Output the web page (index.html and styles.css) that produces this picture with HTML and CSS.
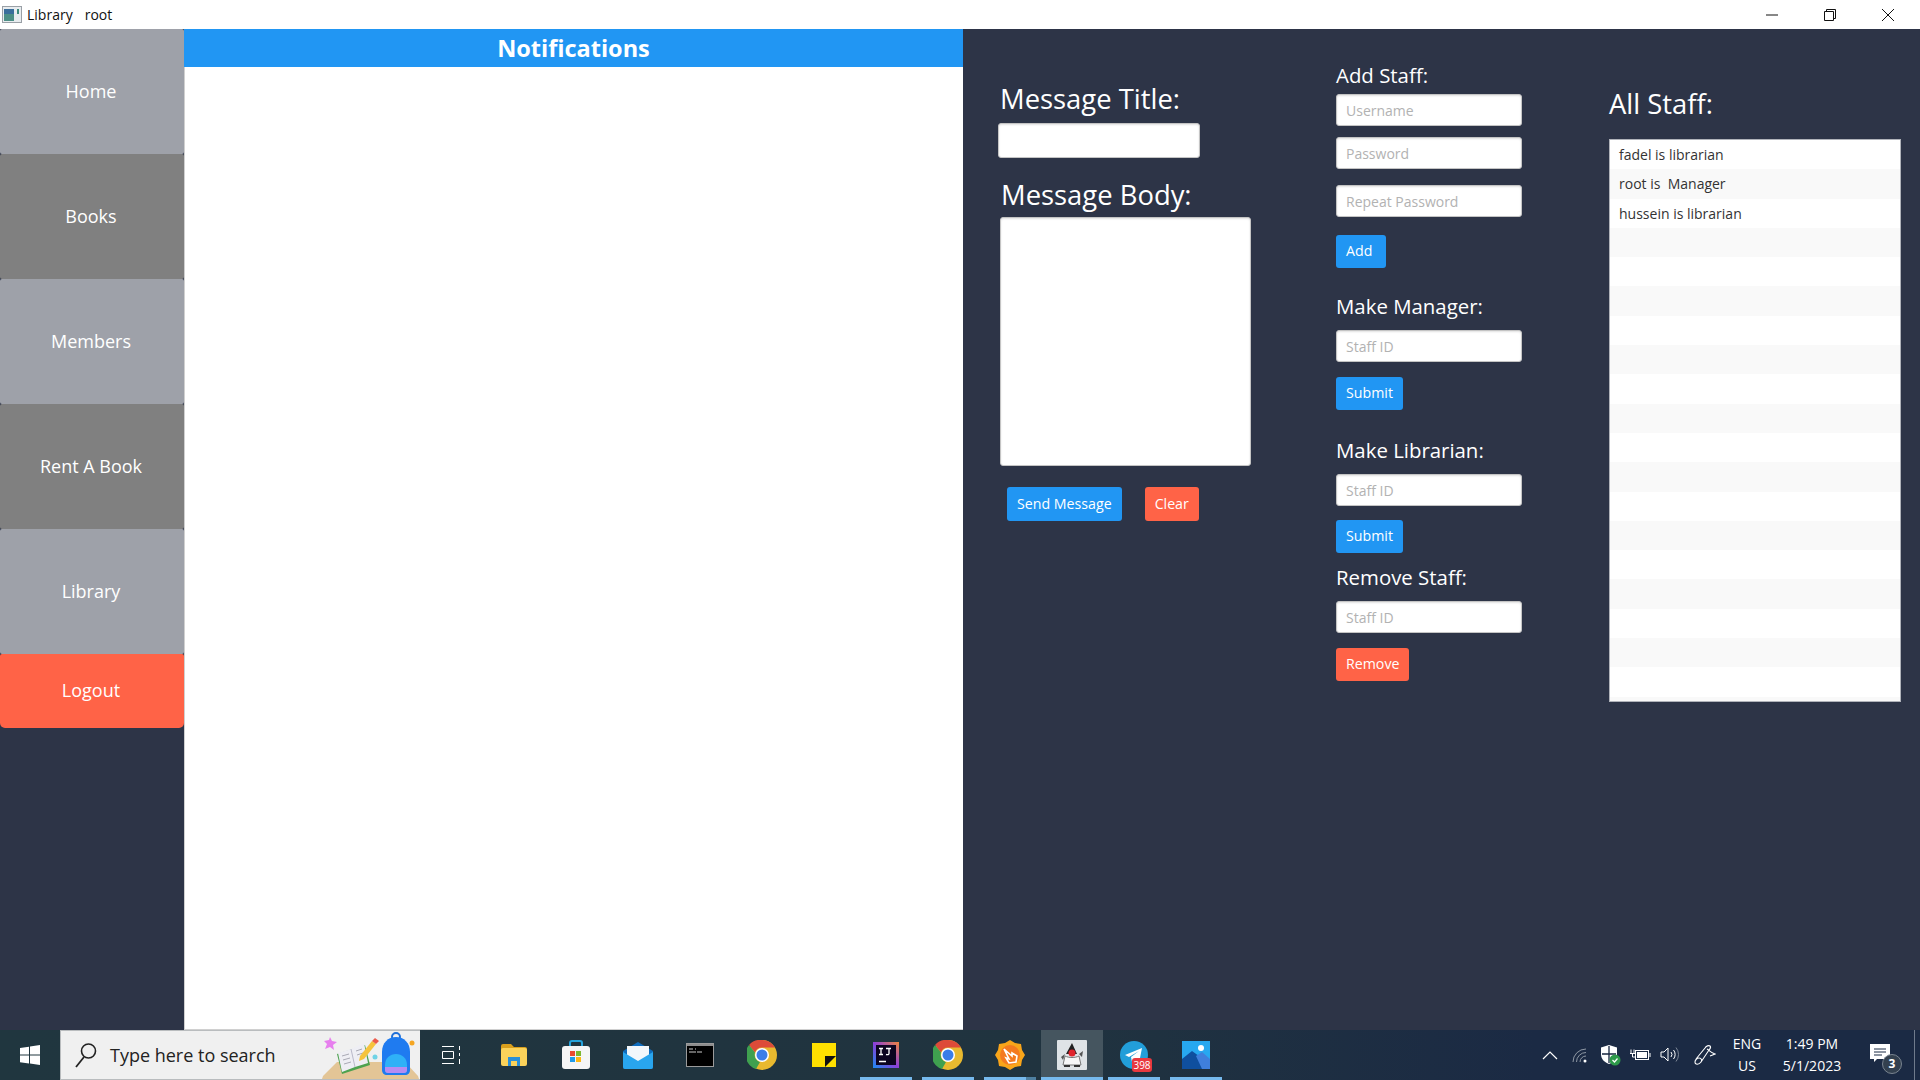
FILE: index.html
```html
<!DOCTYPE html>
<html lang="en">
<head>
    <meta charset="UTF-8">
    <title>Library root</title>
    <link rel="stylesheet" href="styles.css">
</head>
<body>

    <div class="titlebar">
        <svg class="app-icon" width="20" height="18" viewBox="0 0 20 18">
            <rect x="0.5" y="0.5" width="19" height="16" fill="#e8ecef" stroke="#9aa0a6"/>
            <rect x="2" y="3" width="10" height="12" fill="#4c8f86"/>
            <rect x="2" y="3" width="10" height="5" fill="#3a6e9b"/>
            <rect x="15" y="3" width="2" height="5" fill="#3c8b7d"/>
        </svg>
        <span class="app-title">Library</span>
        <span class="app-user">root</span>
        <div class="window-buttons">
            <div class="window-button">
                <svg width="14" height="14" viewBox="0 0 14 14"><path d="M1 7h12" stroke="#111" fill="none"/></svg>
            </div>
            <div class="window-button">
                <svg width="14" height="14" viewBox="0 0 14 14"><path d="M1.5 3.5h9v9h-9zM3.5 3.5v-2h9v9h-2" stroke="#111" fill="none"/></svg>
            </div>
            <div class="window-button">
                <svg width="14" height="14" viewBox="0 0 14 14"><path d="M1 1l12 12M13 1L1 13" stroke="#111" fill="none"/></svg>
            </div>
        </div>
    </div>

    <div class="main">
        <div class="sidebar">
            <button class="nav-btn">Home</button>
            <button class="nav-btn dark">Books</button>
            <button class="nav-btn">Members</button>
            <button class="nav-btn dark">Rent A Book</button>
            <button class="nav-btn">Library</button>
            <button class="nav-btn logout">Logout</button>
        </div>

        <div class="notifications">
            <div class="notifications-header">Notifications</div>
        </div>

        <div class="panel">
            <div class="message-col">
                <label class="big-label title-label">Message Title:</label>
                <input class="title-input" type="text">
                <label class="big-label body-label">Message Body:</label>
                <textarea class="body-input"></textarea>
                <div class="message-actions">
                    <button class="btn blue">Send Message</button>
                    <button class="btn red">Clear</button>
                </div>
            </div>

            <div class="staff-col">
                <label class="small-label">Add Staff:</label>
                <input class="field mt-5" type="text" placeholder="Username">
                <input class="field mt-11" type="text" placeholder="Password">
                <input class="field mt-16" type="text" placeholder="Repeat Password">
                <button class="btn blue add mt-18">Add</button>

                <label class="small-label mt-24">Make Manager:</label>
                <input class="field mt-10" type="text" placeholder="Staff ID">
                <button class="btn blue mt-15">Submit</button>

                <label class="small-label mt-26">Make Librarian:</label>
                <input class="field mt-10" type="text" placeholder="Staff ID">
                <button class="btn blue mt-14">Submit</button>

                <label class="small-label mt-10">Remove Staff:</label>
                <input class="field mt-10" type="text" placeholder="Staff ID">
                <button class="btn red mt-15">Remove</button>
            </div>

            <div class="list-col">
                <label class="big-label">All Staff:</label>
                <ul class="staff-list">
                    <li>fadel is librarian</li>
                    <li>root is&nbsp; Manager</li>
                    <li>hussein is librarian</li>
                    <li></li><li></li><li></li><li></li><li></li><li></li><li></li><li></li>
                    <li></li><li></li><li></li><li></li><li></li><li></li><li></li><li></li><li></li>
                </ul>
            </div>
        </div>
    </div>

    <div class="taskbar">
        <div class="start">
            <svg width="22" height="22" viewBox="0 0 22 22">
                <path d="M1 4l9-1.3V10.500H1zM11 2.500L21 1v9.500H11zM1 11.500h9v8L1 18.200zM11 11.500h10V21l-10-1.500z" fill="#fff"/>
            </svg>
        </div>

        <div class="search">
            <svg class="search-glass" width="24" height="28" viewBox="0 0 24 28">
                <circle cx="14.500" cy="10" r="7" fill="none" stroke="#222" stroke-width="1.600"/>
                <path d="M10 16L2 26" stroke="#222" stroke-width="1.800" fill="none"/>
            </svg>
            <span class="search-text">Type here to search</span>
            <svg class="search-art" width="110" height="49" viewBox="0 0 110 49">
                <path d="M12 49l1-3 14-14 68 0 13 14 1 3z" fill="#e3c596"/>
                <path d="M20 7l2 4 5 1-4 3 1 5-4-3-5 2 2-5-3-3 5-1z" fill="#e77fee"/>
                <circle cx="65" cy="27" r="2.500" fill="#6fd3e6"/>
                <circle cx="102" cy="13" r="2.500" fill="#f5a623"/>
                <path d="M27 24l28-9 5 20-28 9z" fill="#4da24f"/>
                <path d="M28 23l13-4 13-6 4 20-13 4-13 5z" fill="#eeeef4"/>
                <path d="M41 19l4 18" stroke="#b9b9c9" fill="none"/>
                <path d="M32 26l7-2M33 30l7-2M34 34l7-2M46 21l6-2M47 25l6-2" stroke="#a9a9b5" fill="none"/>
                <path d="M50 26l12-15 4 3-12 15-5 2z" fill="#f6c33d"/>
                <path d="M62 11l3-3 4 3-3 3z" fill="#ec5a4c"/>
                <path d="M86 3a4 4 0 0 1 0 8 4 4 0 0 1 0-8z" fill="none" stroke="#1f6fd8" stroke-width="2"/>
                <path d="M72 22c0-9 6-15 14-15s14 6 14 15v18c0 3-2 5-5 5H77c-3 0-5-2-5-5z" fill="#1f7bf0"/>
                <path d="M75 35c0-7 5-11 11-11s11 4 11 11v5c0 2-1 3-3 3H78c-2 0-3-1-3-3z" fill="#2fb1f7"/>
                <path d="M75 37h22v3c0 2-1 3-3 3H78c-2 0-3-1-3-3z" fill="#b68cf2"/>
            </svg>
        </div>

        <div class="apps">
            <div class="slot">
                <svg width="22" height="20" viewBox="0 0 22 20" fill="none" stroke="#fff">
                    <path d="M1 1.500h12M1 18.500h12M1.500 6.500h11v7h-11zM18.500 1v4M18.500 8v3M18.500 14v5"/>
                </svg>
            </div>
            <div class="slot">
                <svg width="28" height="24" viewBox="0 0 28 24">
                    <path d="M1 3a2 2 0 0 1 2-2h8l3 3h11a2 2 0 0 1 2 2v3H1z" fill="#d99f1c"/>
                    <rect x="1" y="5" width="26" height="18" rx="2" fill="#fbd25a"/>
                    <path d="M8 23v-9h12v9h-3v-5H11v5z" fill="#2a8fd8"/>
                </svg>
            </div>
            <div class="slot">
                <svg width="30" height="30" viewBox="0 0 30 30">
                    <path d="M9 8V3a2 2 0 0 1 2-2h8a2 2 0 0 1 2 2v5" fill="none" stroke="#25a3dc" stroke-width="2"/>
                    <rect x="1" y="6" width="28" height="23" rx="3" fill="#f5f5f5"/>
                    <rect x="9" y="11" width="5" height="5" fill="#ea4a2f"/>
                    <rect x="15" y="11" width="5" height="5" fill="#7cb82f"/>
                    <rect x="9" y="17" width="5" height="5" fill="#1f9bea"/>
                    <rect x="15" y="17" width="5" height="5" fill="#fdb813"/>
                </svg>
            </div>
            <div class="slot">
                <svg width="32" height="28" viewBox="0 0 32 28">
                    <path d="M1 10L16 1l15 9v16a2 2 0 0 1-2 2H3a2 2 0 0 1-2-2z" fill="#0f6cbd"/>
                    <path d="M5 5h22v15H5z" fill="#f2f7fb"/>
                    <path d="M1 11l15 9 15-9v15a2 2 0 0 1-2 2H3a2 2 0 0 1-2-2z" fill="#29a5ee"/>
                </svg>
            </div>
            <div class="slot">
                <svg width="28" height="24" viewBox="0 0 28 24">
                    <rect x="0.500" y="0.500" width="27" height="23" fill="#000" stroke="#9b9b9b"/>
                    <rect x="1" y="1" width="26" height="2" fill="#8d8d8d"/>
                    <path d="M3 6h4M9 6h1M3 9h7M11 9h5" stroke="#ccc" fill="none"/>
                </svg>
            </div>
            <div class="slot">
                <svg width="30" height="30" viewBox="0 0 30 30"><use href="#chrome"/></svg>
            </div>
            <div class="slot">
                <svg width="24" height="24" viewBox="0 0 24 24">
                    <rect width="24" height="24" fill="#ffe000"/>
                    <path d="M13 24V13h11z" fill="#111"/>
                </svg>
            </div>
            <div class="slot on">
                <svg width="26" height="26" viewBox="0 0 26 26">
                    <defs><linearGradient id="ij" x1="0" y1="1" x2="1" y2="0">
                        <stop offset="0" stop-color="#1b8cf2"/><stop offset="0.500" stop-color="#8b3fd8"/><stop offset="1" stop-color="#f0843a"/>
                    </linearGradient></defs>
                    <rect width="26" height="26" fill="url(#ij)"/>
                    <rect x="3" y="3" width="20" height="20" fill="#0c0420"/>
                    <path d="M6 6.500h4M8 6.500v6M6 12.500h4M13 6.500h5M16 6.500v5c0 1-1 1.500-3 1M6 19.500h7" stroke="#fff" stroke-width="1.300" fill="none"/>
                </svg>
            </div>
            <div class="slot on">
                <svg width="30" height="30" viewBox="0 0 30 30">
                    <symbol id="chrome" viewBox="0 0 30 30">
                        <circle cx="15" cy="15" r="15" fill="#e8b92f"/>
                        <path d="M15 0a15 15 0 0 1 13 7.500H15a7.500 7.500 0 0 0-7 5L2 5A15 15 0 0 1 15 0z" fill="#dd4b39"/>
                        <path d="M2 5l6 7.500A7.500 7.500 0 0 0 13 22l-4 7A15 15 0 0 1 2 5z" fill="#3fa04f"/>
                        <circle cx="15" cy="15" r="7" fill="#fff"/>
                        <circle cx="15" cy="15" r="5.500" fill="#3b7de8"/>
                    </symbol>
                    <use href="#chrome"/>
                </svg>
            </div>
            <div class="slot on stacked">
                <svg width="30" height="30" viewBox="0 0 30 30">
                    <path d="M15 0l5 3 6 1 1 6 3 5-3 5-1 6-6 1-5 3-5-3-6-1-1-6-3-5 3-5 1-6 6-1z" fill="#f9a51a"/>
                    <circle cx="15" cy="15" r="10" fill="#f47a20"/>
                    <path d="M9 9l8 7 0-3 5 3-1 6-7 1-3-5 3 1z" fill="none" stroke="#fff" stroke-width="1.600"/>
                </svg>
            </div>
            <div class="slot on current">
                <svg width="30" height="30" viewBox="0 0 30 30">
                    <rect width="30" height="30" rx="1" fill="#dfe3e6"/>
                    <path d="M15 3l5 11H9z" fill="#222"/>
                    <circle cx="15" cy="13" r="3.500" fill="#e0242c"/>
                    <path d="M8 16c4 2 10 2 14 0l2 9H6z" fill="#f7f7f7" stroke="#777"/>
                    <path d="M8 14L4 17l2 3zM22 14l4-3-1 6z" fill="#555"/>
                    <path d="M7 25h6v2H7zM17 25h6v2h-6z" fill="#333"/>
                </svg>
            </div>
            <div class="slot on">
                <div class="telegram">
                    <svg width="28" height="28" viewBox="0 0 28 28">
                        <circle cx="14" cy="14" r="14" fill="#229ed9"/>
                        <path d="M5 14l17-7-3 15-5-4-2 3-1-5 8-6-10 6z" fill="#fff"/>
                    </svg>
                    <span class="badge">398</span>
                </div>
            </div>
            <div class="slot on">
                <svg width="28" height="28" viewBox="0 0 28 28">
                    <rect width="28" height="28" fill="#27a8f0"/>
                    <circle cx="19" cy="7" r="3" fill="#fff"/>
                    <path d="M0 18l10-8 18 13v5H0z" fill="#0f4f9e"/>
                    <path d="M14 15l6-4 8 7v10H20z" fill="#3f7fdc"/>
                </svg>
            </div>
        </div>

        <div class="tray">
            <div class="tray-item">
                <svg width="16" height="10" viewBox="0 0 16 10"><path d="M1 9l7-7 7 7" stroke="#fff" stroke-width="1.200" fill="none"/></svg>
            </div>
            <div class="tray-item">
                <svg width="16" height="16" viewBox="0 0 16 16" fill="none" stroke="#8f98a4">
                    <path d="M1 15A13 13 0 0 1 14 2M4.500 15A9.500 9.500 0 0 1 14 5.500M8 15a6 6 0 0 1 6-6"/>
                    <circle cx="13" cy="14" r="1.500" fill="#fff" stroke="none"/>
                </svg>
            </div>
            <div class="tray-item">
                <svg width="21" height="21" viewBox="0 0 21 21">
                    <path d="M9 0l8 2.500V9c0 5-3 8-8 10-5-2-8-5-8-10V2.500z" fill="#fff"/>
                    <path d="M9 1v17M2 9h14" stroke="#16263f" stroke-width="1.300"/>
                    <circle cx="15" cy="15" r="5.500" fill="#2e9a4a"/>
                    <path d="M12.500 15l2 2 3-3.500" stroke="#fff" stroke-width="1.200" fill="none"/>
                </svg>
            </div>
            <div class="tray-item">
                <svg width="21" height="12" viewBox="0 0 21 12" fill="none" stroke="#fff">
                    <path d="M4 .5v4M1 .5v4M0 4.500h5M2.500 4.500V8h3"/>
                    <rect x="5.500" y="1.500" width="13" height="9"/>
                    <rect x="7" y="3" width="10" height="6" fill="#fff" stroke="none"/>
                    <path d="M20 4v4"/>
                </svg>
            </div>
            <div class="tray-item">
                <svg width="21" height="18" viewBox="0 0 21 18" fill="none" stroke="#fff">
                    <path d="M1 6h3l4-4v13l-4-4H1z"/>
                    <path d="M11 6a4 4 0 0 1 0 5M13.500 4a7 7 0 0 1 0 9"/>
                    <path d="M16 1.500a11 11 0 0 1 0 14" stroke="#7c8696"/>
                </svg>
            </div>
            <div class="tray-item pen">
                <svg width="22" height="22" viewBox="0 0 22 22" fill="none" stroke="#fff" stroke-width="1.100">
                    <path d="M2 15l9-11c1-2 4-3 5-2s0 3-1 4L7 18c-2 3-6 3-6 0 0-2 2-4 4-4 3 0 3 3 2 4"/>
                    <path d="M13 5c2 1 4 4 8 5l-5 2"/>
                </svg>
            </div>
            <div class="tray-text lang"><span>ENG</span><span>US</span></div>
            <div class="tray-text clock"><span>1:49 PM</span><span>5/1/2023</span></div>
            <div class="notify">
                <svg width="20" height="18" viewBox="0 0 20 18">
                    <path d="M0 0h20v15H7l-3 3v-3H0z" fill="#fff"/>
                    <path d="M4 5h12M4 8h12M4 11h8" stroke="#1a2a44"/>
                </svg>
                <span class="notify-count">3</span>
            </div>
            <div class="show-desktop"></div>
        </div>
    </div>

</body>
</html>
```

FILE: styles.css
```css
* {
    box-sizing: border-box;
}
body {
    margin: 0;
    width: 1920px;
    height: 1080px;
    overflow: hidden;
    display: flex;
    flex-direction: column;
    font-family: "Open Sans", "Noto Sans", sans-serif;
    background-color: #2d3447;
}

/* window title bar */
.titlebar {
    height: 29px;
    flex: none;
    display: flex;
    align-items: center;
    background-color: white;
    font-size: 14px;
    color: #111;
}
.app-icon {
    margin-left: 2px;
}
.app-title {
    margin-left: 5px;
}
.app-user {
    margin-left: 12px;
}
.window-buttons {
    margin-left: auto;
    margin-right: 3px;
    display: flex;
}
.window-button {
    width: 58px;
    height: 29px;
    display: flex;
    align-items: center;
    justify-content: center;
}

/* app body */
.main {
    height: 1001px;
    flex: none;
    display: flex;
}
.sidebar {
    width: 184px;
    flex: none;
    display: flex;
    flex-direction: column;
}
.nav-btn {
    height: 125px;
    flex: none;
    border: none;
    border-radius: 2px;
    padding: 0 2px 2px 0;
    background-color: #9ea1a9;
    color: white;
    font-family: inherit;
    font-size: 18px;
}
.nav-btn.dark {
    background-color: #808080;
}
.nav-btn.logout {
    height: 74px;
    background-color: #ff6347;
    border-radius: 2px 2px 5px 5px;
}
.notifications {
    width: 779px;
    flex: none;
    background-color: white;
    box-shadow: inset 1px 0 #d0d0d0, inset 0 -1px #d0d0d0;
}
.notifications-header {
    height: 38px;
    background-color: #2196f3;
    color: white;
    text-align: center;
    font-size: 23.500px;
    font-weight: 700;
    line-height: 38px;
}

/* right panel */
.panel {
    flex: 1;
    display: flex;
    color: white;
}
.panel label {
    display: block;
}
.message-col {
    width: 373px;
    flex: none;
    padding: 51px 0 0 32px;
    display: flex;
    flex-direction: column;
    align-items: flex-start;
}
.big-label {
    font-size: 27.400px;
    line-height: 38px;
}
.title-label {
    margin-left: 5px;
    margin-bottom: 5px;
}
.body-label {
    margin: 18px 0 3px 6px;
}
input, textarea {
    display: block;
    border: 1px solid #c4c4c4;
    border-radius: 3px;
    background-color: white;
    box-shadow: inset 0 1px 2px rgba(0, 0, 0, 0.12);
    font-family: inherit;
    outline: none;
}
.title-input {
    width: 202px;
    height: 35px;
    margin-left: 3px;
}
.body-input {
    width: 251px;
    height: 249px;
    margin-left: 5px;
    resize: none;
}
.message-actions {
    margin: 21px 0 0 12px;
    display: flex;
    gap: 23px;
}
.btn {
    height: 33px;
    border: none;
    border-radius: 3px;
    padding: 0 10px 2px;
    color: white;
    font-family: inherit;
    font-size: 14.200px;
}
.btn.blue {
    background-color: #2196f3;
}
.btn.red {
    background-color: #ff6347;
}
.btn.add {
    padding-right: 14px;
}
.message-actions .btn {
    height: 34px;
}
.staff-col {
    width: 273px;
    flex: none;
    padding-top: 32px;
    display: flex;
    flex-direction: column;
    align-items: flex-start;
}
.small-label {
    height: 28px;
    font-size: 20.400px;
    line-height: 29px;
}
.field {
    width: 186px;
    height: 32px;
    padding: 0 9px;
    font-size: 14px;
}
.field::placeholder {
    color: #b2b2b2;
}
.mt-5 { margin-top: 5px; }
.mt-10 { margin-top: 10px; }
.mt-11 { margin-top: 11px; }
.mt-14 { margin-top: 14px; }
.mt-15 { margin-top: 15px; }
.mt-16 { margin-top: 16px; }
.mt-18 { margin-top: 18px; }
.mt-24 { margin-top: 24px; }
.mt-26 { margin-top: 26px; }

.list-col {
    width: 292px;
    flex: none;
    padding-top: 56px;
}
.staff-list {
    margin: 16px 0 0;
    padding: 0;
    list-style: none;
    height: 563px;
    overflow: hidden;
    background-color: white;
    border: 1px solid #b0b3ba;
    color: #333;
    font-size: 14px;
}
.staff-list li {
    height: 29.300px;
    line-height: 29px;
    padding-left: 9px;
}
.staff-list li:nth-child(even) {
    background-color: #f9f9f9;
}

/* taskbar */
.taskbar {
    height: 50px;
    flex: none;
    display: flex;
    background: linear-gradient(to right, #20363f, #20333f 55%, #1b2a44 80%);
}
.start {
    width: 60px;
    flex: none;
    display: flex;
    align-items: center;
    justify-content: center;
}
.search {
    width: 360px;
    flex: none;
    display: flex;
    align-items: center;
    background-color: #f0f0f0;
    border: solid #b9bcbe;
    border-width: 1px 0 1px 1px;
    overflow: hidden;
}
.search-glass {
    margin-left: 13px;
}
.search-text {
    margin-left: 12px;
    font-size: 18px;
    color: #222;
}
.search-art {
    margin-left: auto;
    align-self: flex-end;
    flex: none;
}
.apps {
    display: flex;
    padding-left: 1px;
}
.slot {
    position: relative;
    width: 62px;
    flex: none;
    display: flex;
    align-items: center;
    justify-content: center;
}
.slot.on::after {
    content: "";
    position: absolute;
    left: 5px;
    right: 5px;
    bottom: 0;
    height: 3px;
    background-color: #76b9ed;
}
.slot.stacked::after {
    background: linear-gradient(to right, #76b9ed 80%, #4e7fa0 80%);
}
.slot.current {
    background-color: #45555f;
}
.slot.current::after {
    left: 0;
    right: 0;
}
.telegram {
    position: relative;
    width: 28px;
    height: 28px;
}
.badge {
    position: absolute;
    left: 12px;
    top: 17px;
    width: 20px;
    height: 14px;
    border-radius: 3px;
    background-color: #e8383f;
    color: white;
    font-size: 10px;
    line-height: 14px;
    text-align: center;
}
.tray {
    margin-left: auto;
    width: 385px;
    flex: none;
    display: flex;
    align-items: center;
    color: white;
}
.tray-item {
    width: 30px;
    height: 50px;
    flex: none;
    display: flex;
    align-items: center;
    justify-content: center;
}
.tray-item.pen {
    width: 40px;
}
.tray-text {
    flex: none;
    display: flex;
    flex-direction: column;
    align-items: center;
    gap: 2px;
    font-size: 14px;
    line-height: 20px;
}
.lang {
    width: 44px;
}
.clock {
    width: 86px;
}
.notify {
    position: relative;
    width: 50px;
    height: 50px;
    flex: none;
    display: flex;
    align-items: center;
    justify-content: center;
    padding-bottom: 4px;
}
.notify-count {
    position: absolute;
    left: 27px;
    top: 24px;
    width: 20px;
    height: 20px;
    border-radius: 50%;
    background-color: #33404f;
    border: 1px solid #7a8490;
    font-size: 12px;
    font-weight: 700;
    line-height: 18px;
    text-align: center;
}
.show-desktop {
    width: 15px;
    height: 50px;
    flex: none;
    border-left: 1px solid #6f7b8c;
    transform: translateX(9px);
}
```
